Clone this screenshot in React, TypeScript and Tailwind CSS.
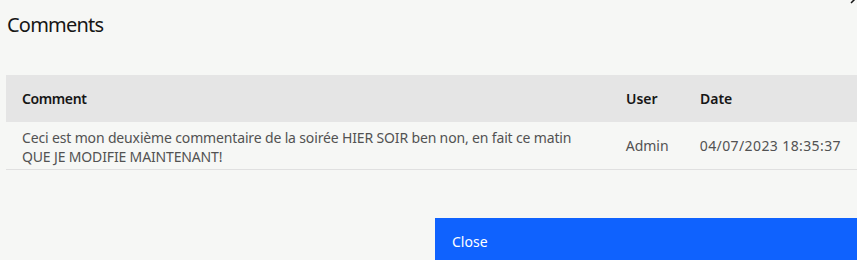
import React from "react";

export default function App() {
  return (
    <div className="relative w-[857px] h-[260px] overflow-hidden bg-[#f6f7f5] font-['Noto_Sans',_'Open_Sans',_Arial,_sans-serif]">
      <svg
        className="absolute right-[-8px] top-[-11px] w-[16px] h-[16px] text-[#161616]"
        viewBox="0 0 16 16"
        fill="none"
        stroke="currentColor"
        strokeWidth="1.5"
      >
        <path d="M2 2 L14 14 M14 2 L2 14" />
      </svg>
      <div className="pl-[7px] pt-[11px] text-[20px] leading-[28px] tracking-[-0.8px] text-[#161616]">Comments</div>
      <div className="mt-[36px] ml-[6px] text-[14px]">
        <div className="flex h-[47px] items-center bg-[#e5e5e5] font-semibold text-[#161616]">
          <div className="w-[604px] px-4 tracking-[-0.4px]">Comment</div>
          <div className="w-[74px] px-4">User</div>
          <div className="flex-1 px-4">Date</div>
        </div>
        <div className="flex h-[48px] items-center border-b border-[#e0e0e0] text-[#525252]">
          <div className="w-[604px] px-4 pt-[2px] leading-[19px] tracking-[-0.15px]">
            Ceci est mon deuxième commentaire de la soirée HIER SOIR ben non, en fait ce matin
            <br />
            QUE JE MODIFIE MAINTENANT!
          </div>
          <div className="w-[74px] px-4">Admin</div>
          <div className="flex-1 whitespace-nowrap px-4 tracking-[0.4px]">04/07/2023 18:35:37</div>
        </div>
      </div>
      <div className="mt-[48px] ml-[435px] flex h-[48px] w-[422px] items-start bg-[#0f62fe] pl-[17px] pt-[15px] text-[14px] leading-[18px] text-white">
        Close
      </div>
    </div>
  );
}
